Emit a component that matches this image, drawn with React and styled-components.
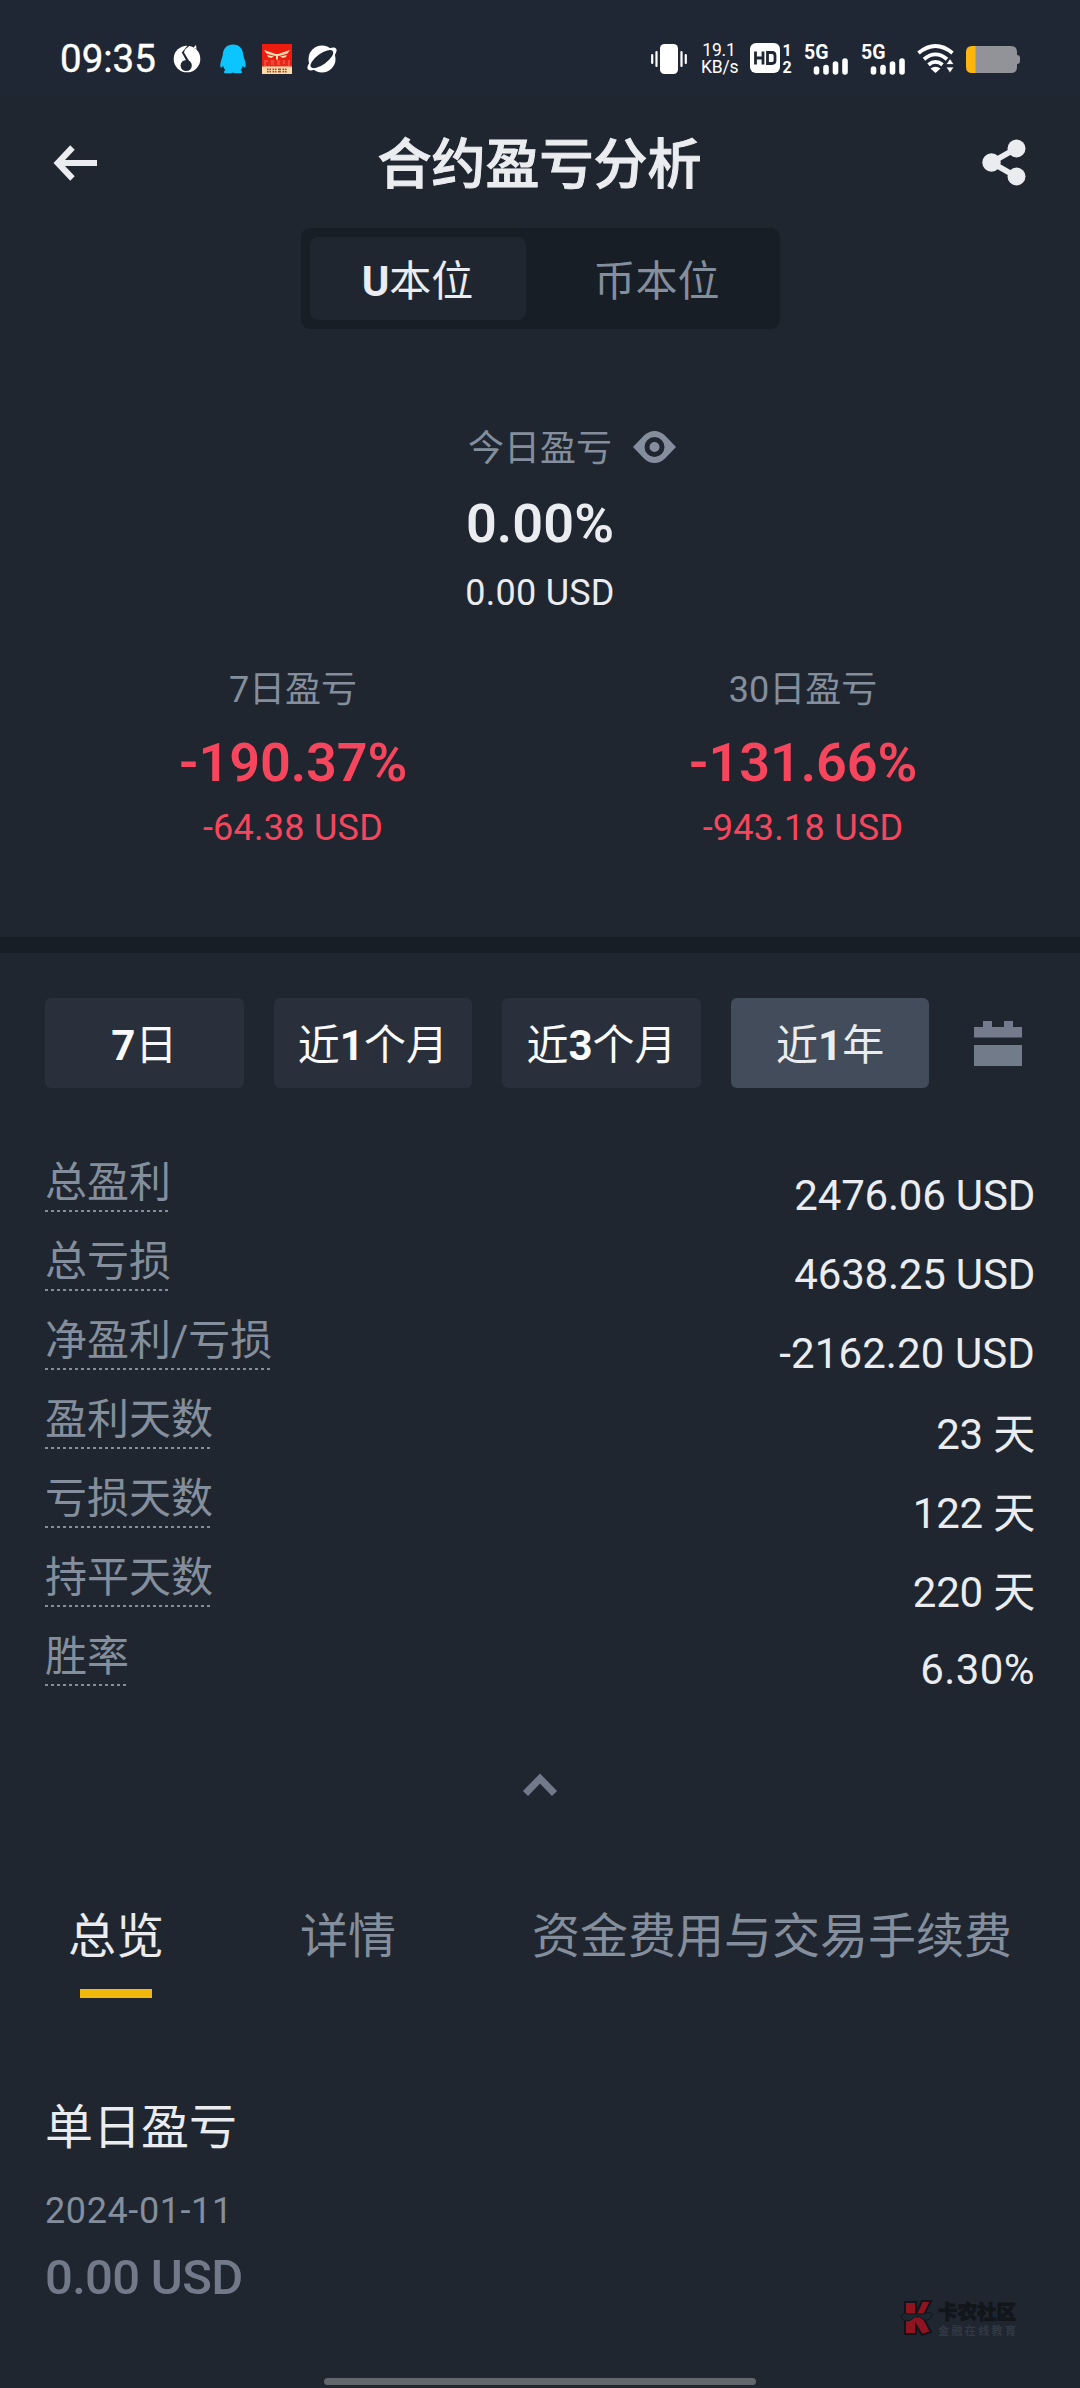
import React from "react";
import styled, { createGlobalStyle } from "styled-components";

const c = {
  bg: "#1f2630",
  status: "#202734",
  dark: "#181e26",
  text: "#eaecef",
  muted: "#848e9c",
  dim: "#727a8a",
  red: "#f6465d",
  yellow: "#f0b90b",
};

const Global = createGlobalStyle`
  * { box-sizing: border-box; }
  body { margin: 0; background: ${c.bg}; }
`;

const Page = styled.main`
  position: relative;
  display: flex;
  flex-direction: column;
  width: 1080px;
  height: 2388px;
  overflow: hidden;
  background: ${c.bg};
  color: ${c.text};
  font-family: Roboto, "Noto Sans CJK SC", sans-serif;
`;

/* ---- status bar ---- */
const StatusBar = styled.div`
  display: flex;
  align-items: center;
  justify-content: space-between;
  height: 96px;
  padding: 22px 60px 0 60px;
  background: ${c.status};
  color: #fff;
`;
const StatusGroup = styled.div`
  display: flex;
  align-items: center;
  height: 40px;
`;
const Clock = styled.span`
  width: 113px;
  font-size: 38.5px;
  line-height: 42px;
  -webkit-text-stroke: 0.4px #fff;
`;
const Glyph = styled.svg`
  display: block;
  flex: none;
  overflow: visible;
  width: ${(p) => p.$w}px;
  height: ${(p) => p.$h}px;
  margin-left: ${(p) => p.$ml || 0}px;
`;
const NetSpeed = styled.div`
  width: 36px;
  margin-left: 14px;
  text-align: center;
  font-size: 17.5px;
  line-height: 17px;
  letter-spacing: -0.2px;
  white-space: nowrap;
`;
const HdBadge = styled.div`
  display: flex;
  margin-left: 13px;
  width: 44px;
`;
const SimNumbers = styled.div`
  display: flex;
  flex-direction: column;
  width: 14px;
  text-align: center;
  font-size: 16px;
  line-height: 17px;
  font-weight: 700;
`;
const Signal = styled.div`
  display: flex;
  flex-direction: column;
  width: 46px;
  height: 34px;
  margin-left: ${(p) => p.$ml}px;
`;
const SignalLabel = styled.span`
  height: 18px;
  font-size: 19.5px;
  line-height: 21px;
  font-weight: 700;
`;

/* ---- header ---- */
const Header = styled.header`
  display: flex;
  align-items: center;
  justify-content: space-between;
  height: 132px;
  padding: 2px 54px 0;
`;
const Title = styled.h1`
  margin: 0;
  padding-top: 5px;
  font-size: 54px;
  line-height: 64px;
  font-weight: 500;
  -webkit-text-stroke: 1px ${c.text};
`;

const Segmented = styled.div`
  display: flex;
  align-self: center;
  width: 479px;
  height: 101px;
  padding: 9px;
  border-radius: 9px;
  background: ${c.dark};
`;
const Segment = styled.button`
  flex: 0 0 ${(p) => p.$w}px;
  border: 0;
  padding: 7px 0 0;
  border-radius: 8px;
  font: 400 42px/60px Roboto, "Noto Sans CJK SC", sans-serif;
  color: ${(p) => (p.$active ? c.text : c.muted)};
  background: ${(p) => (p.$active ? c.bg : "transparent")};
`;
const Strong = styled.span`
  font-weight: 700;
`;

/* ---- summary ---- */
const Summary = styled.section`
  height: 608px;
  padding-top: 96px;
`;
const Stat = styled.div`
  display: flex;
  flex-direction: column;
  align-items: center;
  color: ${(p) => p.$color || c.text};
`;
const StatLabel = styled.div`
  display: grid;
  grid-template-columns: ${(p) => (p.$icon ? "1fr auto 1fr" : "auto")};
  align-items: center;
  width: 100%;
  height: 48px;
  justify-content: center;
  font-size: 36px;
  line-height: 48px;
  color: ${c.muted};
`;
const LabelText = styled.span`
  grid-column: ${(p) => (p.$mid ? 2 : "auto")};
`;
const EyeSlot = styled.div`
  height: 36px;
`;
const Percent = styled.strong`
  margin-top: ${(p) => p.$mt}px;
  font-size: 54px;
  line-height: 64px;
  font-weight: 600;
  letter-spacing: ${(p) => p.$ls}px;
`;
const Amount = styled.span`
  margin-top: ${(p) => p.$mt}px;
  font-size: 36px;
  line-height: 44px;
  letter-spacing: 0.25px;
`;
const Columns = styled.div`
  display: grid;
  grid-template-columns: 510px 510px;
  margin: 51px 0 0 38px;
`;
const Divider = styled.div`
  height: 16px;
  background: ${c.dark};
`;

/* ---- range filter ---- */
const Filters = styled.div`
  display: flex;
  align-items: center;
  padding: 45px 45px 0;
  gap: 30px;
`;
const FilterButton = styled.button`
  width: 198.6px;
  height: 90px;
  padding: 6px 0 0;
  border: 0;
  border-radius: 6px;
  font: 400 42px/60px Roboto, "Noto Sans CJK SC", sans-serif;
  white-space: nowrap;
  color: ${(p) => (p.$active ? c.text : "#fafafa")};
  background: ${(p) => (p.$active ? "#434c5a" : "#29303b")};
`;

/* ---- details ---- */
const Rows = styled.dl`
  margin: 67px 45px 0;
`;
const Row = styled.div`
  display: flex;
  justify-content: space-between;
  height: 79px;
`;
const Term = styled.dt`
  height: 57px;
  font-size: 42px;
  line-height: 56px;
  color: ${c.muted};
  background: repeating-linear-gradient(90deg, ${c.muted} 0 3px, transparent 3px 6px) left bottom / 100% 2px no-repeat;
`;
const Value = styled.dd`
  margin: ${(p) => (p.$low ? 15 : 13)}px 0 0;
  font-size: 42px;
  line-height: 56px;
  letter-spacing: ${(p) => p.$ls ?? -0.2}px;
`;
const Collapse = styled.div`
  display: flex;
  justify-content: center;
  margin-top: 65px;
`;

/* ---- tabs ---- */
const Tabs = styled.nav`
  display: flex;
  height: 96px;
  margin-top: 107px;
  padding-left: 68px;
`;
const Tab = styled.div`
  display: flex;
  flex-direction: column;
  align-items: center;
  margin-right: ${(p) => p.$gap || 0}px;
  font-size: 48px;
  line-height: 68px;
  white-space: nowrap;
  color: ${(p) => (p.$active ? c.text : c.muted)};
  &::after {
    content: "";
    width: 72px;
    height: 9px;
    margin-top: 18px;
    background: ${(p) => (p.$active ? c.yellow : "transparent")};
  }
`;

const Daily = styled.section`
  display: flex;
  flex-direction: column;
  padding: 95px 45px 0;
`;
const DailyTitle = styled.h2`
  margin: 0;
  font-size: 48px;
  line-height: 68px;
  font-weight: 400;
`;
const DailyDate = styled.time`
  margin-top: 27px;
  font-size: 36px;
  line-height: 44px;
  letter-spacing: 0.6px;
  color: ${c.muted};
`;
const DailyAmount = styled.span`
  margin-top: 15px;
  font-size: 49px;
  line-height: 60px;
  font-weight: 500;
  letter-spacing: -0.7px;
  color: ${c.dim};
`;

const Watermark = styled.div`
  position: absolute;
  left: 900px;
  top: 2299px;
  display: flex;
  gap: 4px;
`;
const MarkText = styled.div`
  display: flex;
  flex-direction: column;
  padding-top: 1px;
  white-space: nowrap;
`;
const MarkName = styled.b`
  font: 900 19.5px/22px "Noto Sans CJK SC", sans-serif;
  color: #12161b;
  -webkit-text-stroke: 0.8px #12161b;
`;
const MarkSub = styled.span`
  margin-top: 1px;
  font: 700 11px/14px "Noto Sans CJK SC", sans-serif;
  letter-spacing: 2.4px;
  color: #323943;
`;
const HomeBar = styled.div`
  align-self: center;
  width: 432px;
  height: 7px;
  margin: auto 0 3px;
  border-radius: 4px;
  background: #61676d;
`;

const MusicIcon = () => (
  <Glyph $w={28} $h={28} viewBox="0 0 28 28">
    <circle cx="14" cy="14" r="13.3" fill="#fff" />
    <circle cx="13.2" cy="20.500" r="5.600" fill={c.status} />
    <path d="M17.500 0L12 4.500l-1 3L18.600 20 14 17 8.800 7.500 15 0z" fill={c.status} />
    <path d="M20.500 2.500L23 0l.5 4z" fill="#fff" />
    <path d="M13 7.300L19 4.500" stroke="#fff" strokeWidth="2.500" />
  </Glyph>
);
const PenguinIcon = () => (
  <Glyph $w={28} $h={30} $ml={18} viewBox="0 0 28 30">
    <path
      fill="#0cc5ff"
      d="M14 .5c6 0 10 4 10.200 10.500L26 17c1 3.500.9 6.500-.2 6.600-.7 0-1.500-1-2-1.800-.3 1.800-1.200 3.200-2.300 4.200 1 .8 1.800 1.600 1.500 2.800-2 .8-7 .8-9-.3-2 1.100-7 1.100-9 .3-.3-1.200.5-2 1.500-2.800-1.100-1-2-2.400-2.300-4.200-.5.800-1.300 1.800-2 1.800-1.100-.1-1.200-3.100-.2-6.600l1.800-6C4 4.500 8 .5 14 .5z"
    />
  </Glyph>
);
const RedAppIcon = () => (
  <Glyph $w={30} $h={30} $ml={15} viewBox="0 0 30 30">
    <rect width="30" height="30" fill="#ee1c0e" />
    <path d="M2 16h26v7H2z" fill="#f4473a" />
    <path d="M4 22v-4h2v-2h3v5h3v-6h3v6h3v-5h3v4h2v-4h3v6z" fill="#e02b1d" />
    <path d="M2 6l9 3 2.500 1h3L19 9l9-3-2.500 3.500L19 11.500l-3 .5v3.500h-2V12l-3-.5-6.500-2z" fill="#ffdcae" />
    <path d="M5 11l7 1.500-3 1.500-3-1zM25 11l-7 1.500 3 1.500 3-1z" fill="#ffdcae" />
    <rect y="22.500" width="30" height="7.500" fill="#ffd9a8" />
    <path d="M5 24.500h4v4H5zM10.500 24.500h4v4h-4zM16 24.500h3v4h-3zM20.500 24.500h4v4h-4z" fill="#7a2d14" opacity=".8" />
    <path d="M4.500 26.500h21M7 24v5M12.500 24v5M22.500 24v5" stroke="#ffd9a8" strokeWidth=".8" />
  </Glyph>
);
const PlanetIcon = () => (
  <Glyph $w={32} $h={30} $ml={14} viewBox="0 0 32 30">
    <circle cx="16" cy="15" r="13.500" fill="#fff" />
    <ellipse cx="16" cy="15" rx="17.500" ry="6" transform="rotate(-36 16 15)" fill="#fff" />
    <ellipse cx="15.800" cy="15" rx="13.500" ry="5.300" transform="rotate(-36 16 15)" fill={c.status} />
  </Glyph>
);
const VibrateIcon = () => (
  <Glyph $w={36} $h={30} viewBox="0 0 36 30">
    <rect x="9" y="0" width="18" height="30" rx="4.500" fill="#fff" />
    <path d="M1.200 11v8M5.500 8v14M30.500 8v14M34.800 11v8" stroke="#fff" strokeWidth="2.200" strokeLinecap="round" />
  </Glyph>
);
const HdIcon = () => (
  <HdBadge>
    <Glyph $w={30} $h={32} viewBox="0 0 30 32">
      <rect x="0" y="1" width="30" height="30" rx="6" fill="#fff" />
      <path d="M5.500 9.500v13M13 9.500v13M5.500 16H13" stroke={c.status} strokeWidth="2.800" fill="none" />
      <path d="M17.500 10.500h4.500q3 0 3 3v5q0 3-3 3h-4.500z" stroke={c.status} strokeWidth="2.800" fill="none" />
    </Glyph>
    <SimNumbers>
      <span>1</span>
      <span>2</span>
    </SimNumbers>
  </HdBadge>
);
const SignalIcon = ({ ml }) => (
  <Signal $ml={ml}>
    <SignalLabel>5G</SignalLabel>
    <Glyph $w={46} $h={16} viewBox="0 0 46 16">
      <path
        d="M12.500 9v3M22 7.500v4.500M31.500 4v8M41 1v11"
        stroke="#fff"
        strokeWidth="5.600"
        strokeLinecap="round"
      />
    </Glyph>
  </Signal>
);
const WifiIcon = () => (
  <Glyph $w={38} $h={30} $ml={10} viewBox="0 0 38 30">
    <g fill="none" stroke="#fff" strokeWidth="3.800">
      <path d="M1.500 9Q18.500-5 35.500 9" />
      <path d="M7 15.300Q18.500 5.500 30 15.300" />
      <path d="M11.500 20.800Q18.500 15 25.500 20.800" />
    </g>
    <path d="M18.500 29l-5-4.500q5-3.500 10 0z" fill="#fff" />
    <path d="M33 14.500l4 6h-8zM33 29l4-6h-8z" fill="#fff" stroke={c.status} strokeWidth=".8" />
  </Glyph>
);
const BatteryIcon = () => (
  <Glyph $w={54} $h={28} $ml={11} viewBox="0 0 54 28">
    <path d="M6 1h5v27H6q-6 0-6-6V7q0-6 6-6z" fill="#ffb60a" />
    <path d="M9.500 1H45q6 0 6 6v3q3 0 3 3v3q0 3-3 3v3q0 6-6 6H9.500z" fill="#929399" />
  </Glyph>
);
const BackIcon = () => (
  <Glyph $w={43} $h={36} viewBox="0 0 43 36">
    <path d="M43 18H5M18.500 2.500L3.800 18 18.500 33.500" fill="none" stroke={c.text} strokeWidth="6.200" />
  </Glyph>
);
const ShareIcon = () => (
  <Glyph $w={44} $h={46} viewBox="0 0 44 46">
    <g fill={c.text}>
      <circle cx="9.500" cy="22.500" r="9.200" />
      <circle cx="34.500" cy="8.500" r="9" />
      <circle cx="34.500" cy="36.500" r="9" />
    </g>
    <path d="M34 8.500L9.500 22.500 34 36.500" fill="none" stroke={c.text} strokeWidth="5.600" />
  </Glyph>
);
const EyeIcon = () => (
  <Glyph $w={43} $h={32} $ml={21} viewBox="0 0 43 32">
    <path
      fill={c.muted}
      fillRule="evenodd"
      d="M0 16L11 4.600Q16 0 21.500 0T32 4.600L43 16 32 27.400Q27 32 21.500 32T11 27.400zM21.500 6a10 10 0 1 0 0 20a10 10 0 1 0 0-20zM21.500 11a5 5 0 1 1 0 10a5 5 0 1 1 0-10z"
    />
  </Glyph>
);
const CalendarIcon = () => (
  <Glyph $w={48} $h={45} $ml={15} viewBox="0 0 48 45">
    <path d="M0 6h9V0h9v6h12V0h9v6h9v10.500H0z" fill="#747b8c" />
    <path d="M0 24h48v21H0z" fill="#717b8a" />
  </Glyph>
);
const ChevronUp = () => (
  <Glyph $w={34} $h={23} viewBox="0 0 34 23">
    <path d="M2.500 20.500L17 5.500 31.500 20.500" fill="none" stroke={c.dim} strokeWidth="7" />
  </Glyph>
);
const LogoMark = () => (
  <Glyph $w={34} $h={38} viewBox="0 0 34 38">
    <path d="M5 3h11v12L22 2h9l-8 16 8 15-9 3-6-10v9H5z" fill="#8f1420" stroke="#11151b" strokeWidth="2" />
    <path d="M1 17q3-4 8-2h15q6-3 8 0-1 7-7 6-3-1-5-3h-6q-2 4-7 4-5 0-6-5z" fill="#1d2730" stroke="#12171d" strokeWidth="1" />
  </Glyph>
);

const ranges = [
  ["", "7", "日"],
  ["近", "1", "个月"],
  ["近", "3", "个月"],
  ["近", "1", "年"],
];
const details = [
  { label: "总盈利", value: "2476.06 USD" },
  { label: "总亏损", value: "4638.25 USD" },
  { label: "净盈利/亏损", value: "-2162.20 USD", ls: 0.1 },
  { label: "盈利天数", value: "23 天", low: true },
  { label: "亏损天数", value: "122 天", low: true },
  { label: "持平天数", value: "220 天", low: true },
  { label: "胜率", value: "6.30%", ls: 0.4 },
];

const LossColumn = ({ label, percent, amount }) => (
  <Stat $color={c.red}>
    <StatLabel>
      <LabelText>{label}</LabelText>
    </StatLabel>
    <Percent $mt={17} $ls={-0.1}>{percent}</Percent>
    <Amount $mt={11}>{amount}</Amount>
  </Stat>
);

export default function App() {
  return (
    <Page>
      <Global />
      <StatusBar>
        <StatusGroup>
          <Clock>09:35</Clock>
          <MusicIcon />
          <PenguinIcon />
          <RedAppIcon />
          <PlanetIcon />
        </StatusGroup>
        <StatusGroup>
          <VibrateIcon />
          <NetSpeed>19.1<br />KB/s</NetSpeed>
          <HdIcon />
          <SignalIcon ml={10} />
          <SignalIcon ml={11} />
          <WifiIcon />
          <BatteryIcon />
        </StatusGroup>
      </StatusBar>
      <Header>
        <BackIcon />
        <Title>合约盈亏分析</Title>
        <ShareIcon />
      </Header>
      <Segmented>
        <Segment $active $w={216}><Strong>U</Strong>本位</Segment>
        <Segment $w={262}>币本位</Segment>
      </Segmented>
      <Summary>
        <Stat>
          <StatLabel $icon>
            <LabelText $mid>今日盈亏</LabelText>
            <EyeSlot>
              <EyeIcon />
            </EyeSlot>
          </StatLabel>
          <Percent $mt={19} $ls={0.1}>0.00%</Percent>
          <Amount $mt={15}>0.00 USD</Amount>
        </Stat>
        <Columns>
          <LossColumn label="7日盈亏" percent="-190.37%" amount="-64.38 USD" />
          <LossColumn label="30日盈亏" percent="-131.66%" amount="-943.18 USD" />
        </Columns>
      </Summary>
      <Divider />
      <Filters>
        {ranges.map(([before, num, after], i) => (
          <FilterButton key={before + num + after} $active={i === 3}>
            {before}<Strong>{num}</Strong>{after}
          </FilterButton>
        ))}
        <CalendarIcon />
      </Filters>
      <Rows>
        {details.map((d) => (
          <Row key={d.label}>
            <Term>{d.label}</Term>
            <Value $low={d.low} $ls={d.ls}>{d.value}</Value>
          </Row>
        ))}
      </Rows>
      <Collapse>
        <ChevronUp />
      </Collapse>
      <Tabs>
        <Tab $active $gap={136}>总览</Tab>
        <Tab $gap={136}>详情</Tab>
        <Tab>资金费用与交易手续费</Tab>
      </Tabs>
      <Daily>
        <DailyTitle>单日盈亏</DailyTitle>
        <DailyDate>2024-01-11</DailyDate>
        <DailyAmount>0.00 USD</DailyAmount>
      </Daily>
      <Watermark>
        <LogoMark />
        <MarkText>
          <MarkName>卡农社区</MarkName>
          <MarkSub>金融在线教育</MarkSub>
        </MarkText>
      </Watermark>
      <HomeBar />
    </Page>
  );
}
